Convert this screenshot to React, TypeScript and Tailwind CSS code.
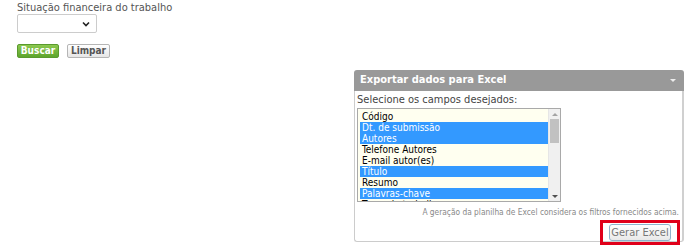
const fields = [
  { label: "Código", selected: false },
  { label: "Dt. de submissão", selected: true },
  { label: "Autores", selected: true },
  { label: "Telefone Autores", selected: false },
  { label: "E-mail autor(es)", selected: false },
  { label: "Título", selected: true },
  { label: "Resumo", selected: false },
  { label: "Palavras-chave", selected: true },
  { label: "Tema de trabalho", selected: false },
]

function FieldList() {
  return (
    <div className="flex w-[204px] h-[94px] border border-[#a9a9a9] bg-[#fffff0] overflow-hidden">
      <div className="flex-1 overflow-hidden pt-[2px] pl-[2px] text-[10px]">
        {fields.map((f) => (
          <div
            key={f.label}
            className={
              f.selected
                ? "h-[11px] leading-[11px] pl-[2px] bg-[#3399ff] text-white"
                : "h-[11px] leading-[11px] pl-[2px] text-black"
            }
          >
            {f.label}
          </div>
        ))}
      </div>
      <div className="w-[12px] flex flex-col bg-[#f0f0f0] border-l border-[#e6e6e6]">
        <div className="h-[10px] flex items-center justify-center">
          <div className="w-0 h-0 border-l-[3px] border-r-[3px] border-b-[3px] border-l-transparent border-r-transparent border-b-[#a3a3a3]" />
        </div>
        <div className="mx-[1px] h-[24px] bg-[#c1c1c1]" />
        <div className="flex-1" />
        <div className="h-[10px] flex items-center justify-center">
          <div className="w-0 h-0 border-l-[3px] border-r-[3px] border-t-[3px] border-l-transparent border-r-transparent border-t-[#505050]" />
        </div>
      </div>
    </div>
  )
}

export default function App() {
  return (
    <div className="w-[700px] h-[249px] bg-white text-[11px] font-['DejaVu_Sans_Condensed','DejaVu_Sans',sans-serif] overflow-hidden">
      <div className="pl-[17px] pt-[1px]">
        <div className="text-[#555] leading-[13px]">Situação financeira do trabalho</div>
        <div className="w-[80px] h-[19px] border border-[#ccc] rounded-[2px] bg-white flex items-center justify-end pr-[6px]">
          <svg width="8" height="6" viewBox="0 0 8 6">
            <path d="M1 1.5 L4 4.5 L7 1.5" stroke="#222" strokeWidth="1.6" fill="none" />
          </svg>
        </div>
        <div className="flex gap-[8px] mt-[11px]">
          <button className="h-[14px] w-[42px] rounded-[2px] border border-[#5a9a2e] bg-gradient-to-b from-[#8cc84f] to-[#5da52c] text-white font-bold text-[10px] leading-[12px]">
            Buscar
          </button>
          <button className="h-[14px] w-[43px] rounded-[2px] border border-[#b5b5b5] bg-gradient-to-b from-white to-[#e6e6e6] text-[#555] font-bold text-[10px] leading-[12px]">
            Limpar
          </button>
        </div>
      </div>

      <div className="ml-[354px] mt-[12px] w-[330px] flex flex-col">
        <div className="h-[21px] bg-[#999] rounded-t-[3px] flex items-center justify-between pl-[6px] pr-[8px]">
          <span className="text-white font-bold">Exportar dados para Excel</span>
          <div className="w-0 h-0 border-l-[3px] border-r-[3px] border-t-[3px] border-l-transparent border-r-transparent border-t-[#eee]" />
        </div>
        <div className="h-[151px] border border-t-0 border-[#ccc] border-r-[2px] border-r-[#d0d0d0] rounded-b-[3px] pl-[2px] pr-[2px] pt-[3px]">
          <div className="text-[#444] leading-[12px]">Selecione os campos desejados:</div>
          <div className="mt-[2px]">
            <FieldList />
          </div>
          <div className="text-right text-[#888] text-[8.3px] leading-[12px] mt-[4px] pr-[1px]">
            A geração da planilha de Excel considera os filtros fornecidos acima.
          </div>
          <div className="flex justify-end mt-[2px]">
            <div className="border-[3px] border-[#e0001a] w-[80px] h-[25px] flex items-center justify-center">
              <button className="h-[17px] w-[62px] rounded-[3px] border border-[#8fb3cc] bg-gradient-to-b from-white to-[#e8e8e8] text-[#777] text-[11px] leading-[14px]">
                Gerar Excel
              </button>
            </div>
          </div>
        </div>
      </div>
    </div>
  )
}
